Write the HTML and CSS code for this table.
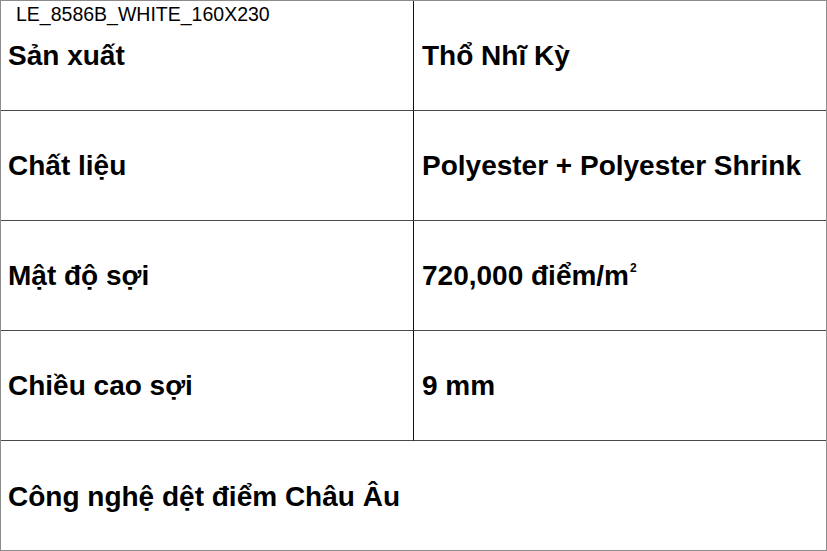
FILE: index.html
```html
<!DOCTYPE html>
<html lang="vi">
<head>
<meta charset="utf-8">
<link rel="stylesheet" href="styles.css">
</head>
<body>
<div class="sheet">
  <div class="label">LE_8586B_WHITE_160X230</div>
  <div class="cell key"><span>Sản xuất</span></div>
  <div class="cell val"><span>Thổ Nhĩ Kỳ</span></div>
  <div class="cell key"><span>Chất liệu</span></div>
  <div class="cell val"><span>Polyester + Polyester Shrink</span></div>
  <div class="cell key"><span>Mật độ sợi</span></div>
  <div class="cell val"><span>720,000 điểm/m<sup class="sup">2</sup></span></div>
  <div class="cell key"><span>Chiều cao sợi</span></div>
  <div class="cell val"><span>9 mm</span></div>
  <div class="cell full"><span>Công nghệ dệt điểm Châu Âu</span></div>
</div>
</body>
</html>
```

FILE: styles.css
```css
* { box-sizing: border-box; }
html, body { margin: 0; padding: 0; background: #fff; }
body { font-family: "Liberation Sans", Arial, sans-serif; color: #000; }
.sheet {
  position: relative;
  width: 827px;
  height: 551px;
  border: 1px solid #8c8c8c;
  display: grid;
  grid-template-columns: 413px 1fr;
  grid-template-rows: 110px 110px 110px 110px 1fr;
}
.cell {
  display: flex;
  align-items: center;
  padding: 0 0 0 7px;
  font-size: 28px;
  font-weight: bold;
  border-bottom: 1px solid #4a4a4a;
  white-space: nowrap;
}
.key { border-right: 1px solid #111; }
.val { padding-left: 8px; }
.full { grid-column: 1 / 3; border-bottom: none; padding-top: 2px; }
.sup { font-size: 12px; vertical-align: 13px; line-height: 0; margin-left: 1px; }
.label {
  position: absolute;
  top: 4px;
  left: 15px;
  font-size: 19.5px;
  line-height: 19px;
  font-weight: normal;
}
```
